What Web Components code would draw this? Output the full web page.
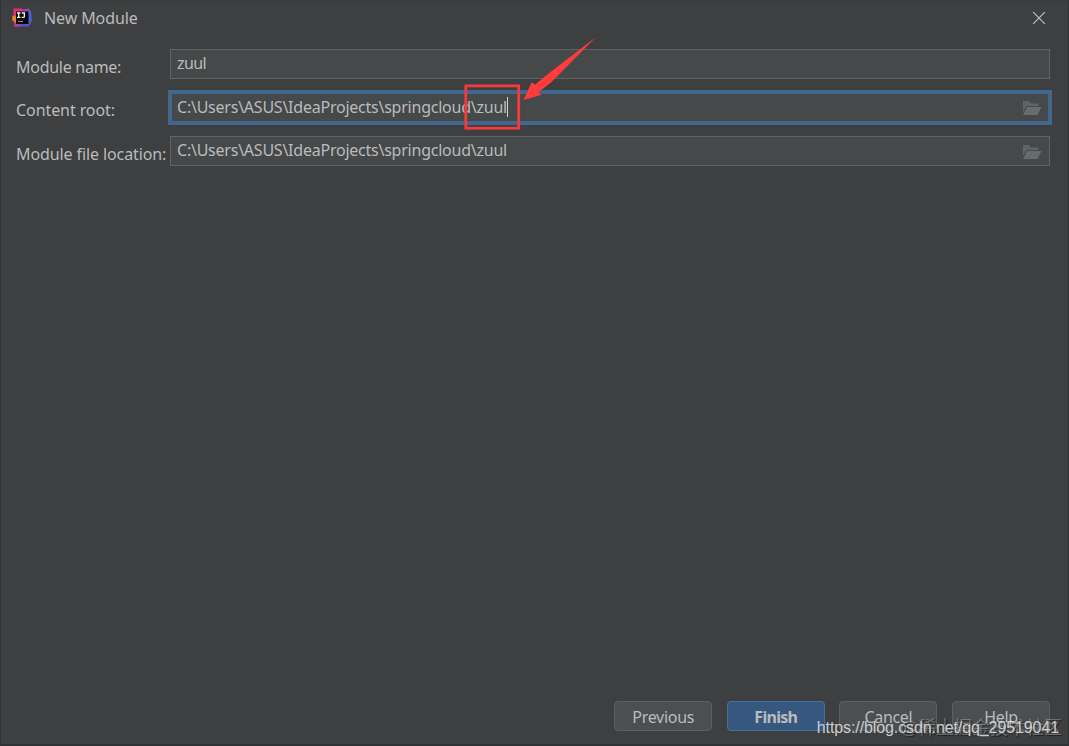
<!DOCTYPE html>
<html lang="en">
<head>
<meta charset="utf-8">
<title>New Module</title>
<style>
  html, body {
    margin: 0;
    height: 100%;
    overflow: hidden;
    background: #3d3f41;
  }
  body {
    font: 16px/22px "Noto Sans", "Open Sans", sans-serif;
    color: #bbbbbb;
  }
</style>
</head>
<body>
<module-dialog>
  <title-bar slot="title">New Module</title-bar>
  <form-row label="Module name:" spacing="-0.27px">
    <path-field spacing="-0.6px">zuul</path-field>
  </form-row>
  <form-row label="Content root:" spacing="-0.08px">
    <path-field browse focused spacing="-0.235px">C:\Users\ASUS\IdeaProjects\springcloud\zuul</path-field>
  </form-row>
  <form-row label="Module file location:" spacing="-0.1px">
    <path-field browse spacing="-0.235px">C:\Users\ASUS\IdeaProjects\springcloud\zuul</path-field>
  </form-row>
  <dialog-button slot="actions">Previous</dialog-button>
  <dialog-button slot="actions" primary>Finish</dialog-button>
  <dialog-button slot="actions">Cancel</dialog-button>
  <dialog-button slot="actions">Help</dialog-button>
  <arrow-mark slot="overlay"></arrow-mark>
  <water-mark slot="overlay"></water-mark>
</module-dialog>

<script>
class BaseElement extends HTMLElement {
  constructor() {
    super();
    this.attachShadow({ mode: "open" });
  }
  connectedCallback() {
    const template = document.createElement("template");
    template.innerHTML = this.getStyles() + this.getTemplate();
    this.shadowRoot.replaceChildren(template.content.cloneNode(true));
  }
}

class ModuleDialog extends BaseElement {
  getTemplate() {
    return `
      <slot name="title"></slot>
      <main><slot></slot></main>
      <footer><slot name="actions"></slot></footer>
      <slot name="overlay"></slot>
    `;
  }
  getStyles() {
    return `
      <style>
        :host {
          display: flex;
          flex-direction: column;
          position: relative;
          box-sizing: border-box;
          width: 1069px;
          height: 746px;
          background: #3d3f41;
          border: 1px solid #303233;
          border-top-color: #393b3d;
          border-bottom-width: 2px;
        }
        main {
          flex: 1;
          display: flex;
          flex-direction: column;
          gap: 13px;
          padding: 14px 18px 0 15px;
        }
        footer {
          display: flex;
          justify-content: flex-end;
          gap: 14.6px;
          padding: 0 18px 13px 0;
        }
      </style>
    `;
  }
}

class TitleBar extends BaseElement {
  getTemplate() {
    return `
      <svg class="logo" width="22" height="22" viewBox="0 0 22 22">
        <defs>
          <linearGradient id="pink" x1="0" y1="0" x2="0.7" y2="1">
            <stop offset="0" stop-color="#ee315d"/>
            <stop offset="1" stop-color="#a33bb8"/>
          </linearGradient>
          <linearGradient id="blue" x1="0" y1="0" x2="0" y2="1">
            <stop offset="0" stop-color="#8a4fae"/>
            <stop offset="0.4" stop-color="#4165cf"/>
            <stop offset="1" stop-color="#5552cc"/>
          </linearGradient>
        </defs>
        <path d="M12 2.5L17.5 1.5 20 4.5l1 9.5-3.5 5.5H9l3-9z" fill="url(#blue)"/>
        <path d="M2.5 1.5h8l3.5 3-3 10-1.5 5-6 .5-1-7z" fill="url(#pink)"/>
        <path d="M1.5 8.5l4 1v7L1 13z" fill="#e5812f"/>
        <rect x="5" y="4.5" width="12.5" height="12.5" fill="#08080b"/>
        <path d="M6 6h3.4M7.7 6v4.4M6 10.4h3.4M10.8 6h2.6v3.2q0 1.2-1.2 1.2h-1.6" fill="none" stroke="#f3f3f3" stroke-width="1.3"/>
        <path d="M7 14.5h5" stroke="#888" stroke-width="1"/>
      </svg>
      <span><slot></slot></span>
      <svg class="close" width="14" height="14" viewBox="0 0 14 14">
        <path d="M1.2 1.2l11.6 11.6M12.8 1.2L1.2 12.8" stroke="#bfc0c1" stroke-width="1.2"/>
      </svg>
    `;
  }
  getStyles() {
    return `
      <style>
        :host {
          display: flex;
          align-items: center;
          height: 34px;
          padding: 0 22px 0 10px;
        }
        .logo { flex: none; }
        span {
          flex: 1;
          margin-left: 11px;
          letter-spacing: -0.1px;
        }
      </style>
    `;
  }
}

class FormRow extends BaseElement {
  getTemplate() {
    return `
      <label>${this.getAttribute("label")}</label>
      <slot></slot>
    `;
  }
  getStyles() {
    return `
      <style>
        :host {
          display: flex;
        }
        label {
          flex: none;
          width: 154px;
          padding-top: 7px;
          white-space: nowrap;
          letter-spacing: ${this.getAttribute("spacing")};
        }
      </style>
    `;
  }
}

class PathField extends BaseElement {
  getTemplate() {
    const caret = this.hasAttribute("focused") ? "<i></i>" : "";
    const folder = `
      <svg width="20" height="16" viewBox="0 0 20 16">
        <path d="M1 1h6l2 2.5h7.5V6H4.5L1 12z" fill="#5f6466"/>
        <path d="M5 7h14.5L15.5 15H1z" fill="#676c6e"/>
      </svg>
    `;
    return `
      <span><slot></slot></span>${caret}
      <b></b>
      ${this.hasAttribute("browse") ? folder : ""}
    `;
  }
  getStyles() {
    return `
      <style>
        :host {
          flex: 1;
          display: flex;
          align-items: center;
          box-sizing: border-box;
          height: 30px;
          padding: 0 7px 0 6px;
          border: 1px solid #5f6364;
          background: #45494a;
        }
        :host([focused]) {
          height: 31px;
          border-color: #42678f;
          box-shadow: 0 0 0 2px #42678f, inset 0 0 0 1px #42678f;
        }
        span {
          white-space: nowrap;
          padding-bottom: 2px;
          letter-spacing: ${this.getAttribute("spacing")};
        }
        i {
          width: 1px;
          height: 20px;
          margin-bottom: 1px;
          background: #d0d0d0;
        }
        b { flex: 1; }
        svg { padding-top: 1px; }
      </style>
    `;
  }
}

class DialogButton extends BaseElement {
  getTemplate() {
    return `<slot></slot>`;
  }
  getStyles() {
    return `
      <style>
        :host {
          display: flex;
          align-items: center;
          justify-content: center;
          box-sizing: border-box;
          width: 98px;
          height: 30px;
          padding-top: 2px;
          border: 1px solid #5b5f61;
          border-radius: 4px;
          background: #4b4f51;
          letter-spacing: -0.3px;
        }
        :host([primary]) {
          border-color: #45719b;
          background: #365880;
          font-weight: 700;
          letter-spacing: -0.7px;
        }
      </style>
    `;
  }
}

/* Red frame and arrow pointing at the end of the content root */
class ArrowMark extends BaseElement {
  getTemplate() {
    return `
      <svg width="136" height="96" viewBox="0 0 136 96">
        <rect x="2.8" y="49.9" width="52.9" height="42.3" fill="none" stroke="#f8393b" stroke-width="2.8"/>
        <path d="M133 1L83 39.5l-10.5 9-4-2L60.5 64l17.5-5-2.5-3L88 46.5z" fill="#ff3b3b"/>
      </svg>
    `;
  }
  getStyles() {
    return `
      <style>
        :host {
          position: absolute;
          left: 462px;
          top: 35px;
        }
        svg { display: block; }
      </style>
    `;
  }
}

class WaterMark extends BaseElement {
  getTemplate() {
    return `
      <span class="site">@稀土掘金技术社区</span>
      <span class="url">https://blog.csdn.net/qq_29519041</span>
    `;
  }
  getStyles() {
    return `
      <style>
        :host {
          position: absolute;
          right: 6px;
          bottom: 4px;
          display: grid;
          justify-items: end;
          white-space: nowrap;
        }
        span { grid-area: 1 / 1; }
        .site {
          font: 18px/24px "Liberation Sans", "Noto Sans CJK SC", sans-serif;
          color: rgba(190, 190, 190, 0.42);
          text-shadow: 1px 1px 1px rgba(0, 0, 0, 0.5);
        }
        .url {
          padding-right: 3px;
          font: 16px/24px "Liberation Sans", sans-serif;
          letter-spacing: -0.1px;
          color: rgba(225, 225, 225, 0.88);
        }
      </style>
    `;
  }
}

customElements.define("module-dialog", ModuleDialog);
customElements.define("title-bar", TitleBar);
customElements.define("form-row", FormRow);
customElements.define("path-field", PathField);
customElements.define("dialog-button", DialogButton);
customElements.define("arrow-mark", ArrowMark);
customElements.define("water-mark", WaterMark);
</script>
</body>
</html>
